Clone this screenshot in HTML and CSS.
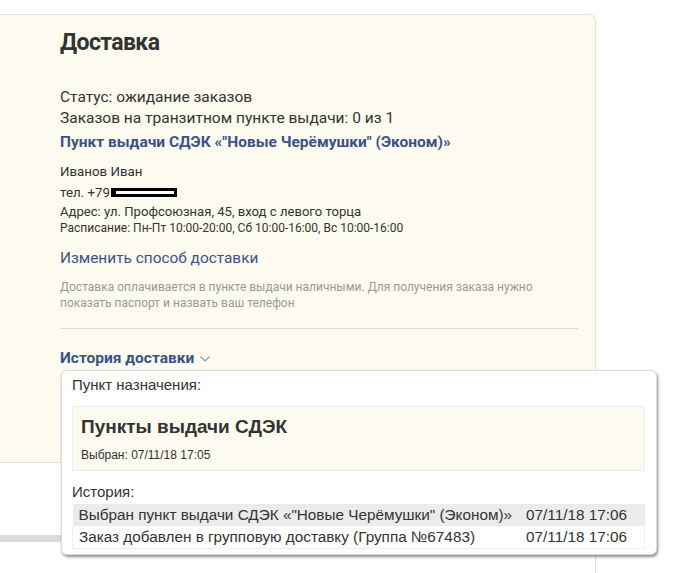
FILE: index.html
```html
<!DOCTYPE html>
<html lang="ru">
<head>
<meta charset="utf-8">
<link rel="stylesheet" href="styles.css">
</head>
<body>
<div class="page">
  <section class="card">
    <h1 class="title">Доставка</h1>
    <div class="status">
      <div class="line">Статус: ожидание заказов</div>
      <div class="line">Заказов на транзитном пункте выдачи: 0 из 1</div>
      <a class="point-link">Пункт выдачи СДЭК «"Новые Черёмушки" (Эконом)»</a>
    </div>
    <div class="contact">
      <div class="name">Иванов Иван</div>
      <div class="phone">тел. +79<span class="redact"></span></div>
      <div class="small address">Адрес: ул. Профсоюзная, 45, вход с левого торца</div>
      <div class="small">Расписание: Пн-Пт 10:00-20:00, Сб 10:00-16:00, Вс 10:00-16:00</div>
    </div>
    <a class="change-link">Изменить способ доставки</a>
    <p class="note">Доставка оплачивается в пункте выдачи наличными. Для получения заказа нужно показать паспорт и назвать ваш телефон</p>
    <hr class="divider">
    <div class="history-toggle">История доставки
      <svg class="chev" width="10" height="6" viewBox="0 0 10 6"><path d="M0.5 0.5 L5 5 L9.5 0.5" fill="none" stroke="#8a96ad" stroke-width="1.1"/></svg>
    </div>
  </section>
  <div class="below">
    <div class="scrollbar"></div>
  </div>

  <div class="popup">
    <div class="label">Пункт назначения:</div>
    <div class="dest">
      <div class="dest-title">Пункты выдачи СДЭК</div>
      <div class="dest-date">Выбран: 07/11/18 17:05</div>
    </div>
    <div class="label hist-label">История:</div>
    <table class="hist">
      <tr class="odd"><td>Выбран пункт выдачи СДЭК «"Новые Черёмушки" (Эконом)»</td><td class="dt">07/11/18 17:06</td></tr>
      <tr class="even"><td>Заказ добавлен в групповую доставку (Группа №67483)</td><td class="dt">07/11/18 17:06</td></tr>
    </table>
  </div>
</div>
</body>
</html>
```
FILE: styles.css
```css
html, body {
  margin: 0;
  padding: 0;
  background: #fff;
}
.page {
  position: relative;
  width: 596px;
  padding-top: 14px;
  font-family: Roboto, "Liberation Sans", sans-serif;
  color: #333;
}
.card {
  box-sizing: border-box;
  height: 449px;
  background: #fdfbef;
  border: 1px solid #e2e1da;
  border-left: none;
  border-radius: 0 7px 0 0;
  padding: 13px 17px 0 60px;
}
.title {
  margin: 0;
  font-size: 23px;
  line-height: 30px;
  font-weight: 700;
  color: #333;
  letter-spacing: -0.6px;
}
.status {
  margin-top: 29px;
  font-size: 15.5px;
  line-height: 21px;
}
.point-link {
  display: block;
  margin-top: 3px;
  font-weight: 700;
  color: #3b5285;
}
.contact {
  margin-top: 9px;
  font-size: 13.3px;
}
.name {
  line-height: 20px;
}
.phone {
  line-height: 21px;
  display: flex;
  align-items: center;
}
.redact {
  display: inline-block;
  width: 58px;
  height: 3px;
  margin-left: 3px;
  background: #fff;
  border: 3px solid #000;
  box-shadow: -2px 0 0 #000;
}
.small {
  font-size: 12px;
  line-height: 17px;
}
.address {
  font-size: 13.1px;
}
.change-link {
  display: block;
  margin-top: 11px;
  font-size: 15.4px;
  line-height: 21px;
  color: #3b5285;
}
.note {
  margin: 10px 0 0;
  font-size: 12px;
  line-height: 16px;
  color: #999;
}
.divider {
  margin: 17px 0 0;
  border: none;
  border-top: 1px solid #dddcd5;
}
.history-toggle {
  margin-top: 19px;
  font-size: 15.5px;
  line-height: 21px;
  font-weight: 700;
  color: #3b5285;
  display: flex;
  align-items: center;
  gap: 6px;
}
.chev {
  margin-top: 1px;
}
.below {
  height: 109px;
  border-right: 1px solid #e2e1da;
  position: relative;
}
.scrollbar {
  margin-top: 72px;
  width: 300px;
  height: 7px;
  background: #dcdcdc;
}
.popup {
  position: absolute;
  left: 61px;
  top: 370px;
  width: 596px;
  height: 185px;
  box-sizing: border-box;
  background: #fff;
  border: 1px solid #dcdcdc;
  border-radius: 6px;
  box-shadow: 1px 2px 3px rgba(0, 0, 0, 0.45);
  padding: 5px 11px 0 10px;
  font-family: "Liberation Sans", Arial, sans-serif;
  color: #333;
}
.label {
  font-size: 15px;
  line-height: 18px;
}
.dest {
  margin-top: 12px;
  height: 65px;
  box-sizing: border-box;
  background: #fdfbef;
  border: 1px solid #efeee6;
  padding: 8px 8px 0;
}
.dest-title {
  font-size: 19px;
  line-height: 24px;
  font-weight: 700;
}
.dest-date {
  margin-top: 9px;
  font-size: 12px;
  line-height: 14px;
}
.hist-label {
  margin-top: 12px;
}
.hist {
  width: 100%;
  margin-top: 3px;
  border-collapse: collapse;
  font-size: 15.3px;
}
.hist td {
  padding: 0 6px;
  height: 22px;
  line-height: 22px;
  white-space: nowrap;
}
.hist .odd {
  background: #ebebeb;
}
.hist .even td {
  border-bottom: 1px solid #efefef;
}
.hist .even td:first-child {
  border-left: 1px solid #efefef;
}
.hist .even td.dt {
  border-right: 1px solid #efefef;
}
.hist .dt {
  width: 106px;
  padding-right: 12px;
}
```
